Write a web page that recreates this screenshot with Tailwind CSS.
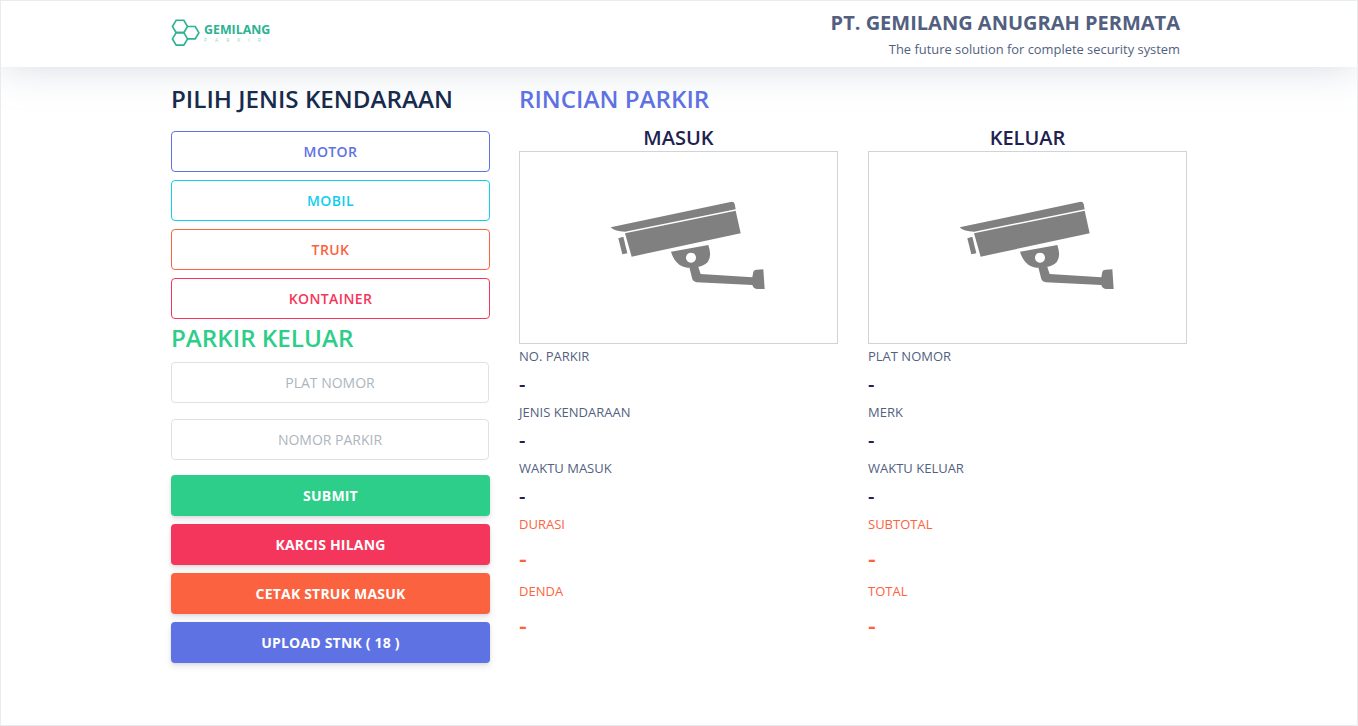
<!DOCTYPE html>
<html lang="id">
<head>
  <meta charset="UTF-8"/>
  <title>Gemilang Parkir</title>
  <script src="https://cdn.jsdelivr.net/npm/@tailwindcss/browser@4"></script>
</head>
<body class="bg-white font-['Open_Sans',sans-serif] antialiased">
  <div class="h-[726px] border border-[#e9ecef] overflow-hidden">
    <!-- Header -->
    <header class="h-[66px] bg-white shadow-[0_0_40px_rgba(136,152,170,0.35)] flex justify-between pl-[170px] pr-[177px]">
      <div class="flex items-center gap-[2px] pb-[2px]">
        <svg width="31" height="28" viewBox="0 0 30 27" fill="none" stroke="#2bb392" stroke-width="1.6">
          <path d="M5 1.2h7.400l3.600 6-3.600 6H5l-3.600-6z"/>
          <path d="M5 13.200h7.400l3.600 6-3.600 6H5l-3.600-6z"/>
          <path d="M16 7.200h7.400l3.600 6-3.600 6H16"/>
        </svg>
        <div class="flex flex-col">
          <span class="text-[12.4px] leading-[13px] font-bold text-[#2bb392]">GEMILANG</span>
          <span class="text-[5px] leading-[7px] pt-px tracking-[8px] text-[#8fd8c6]">PARKIR</span>
        </div>
      </div>
      <div class="text-right">
        <p class="text-[20px] leading-[26px] pt-[9px] font-bold text-[#525f7f]">PT. GEMILANG ANUGRAH PERMATA</p>
        <p class="text-[12.9px] leading-[18px] pt-[4px] text-[#525f7f]">The future solution for complete security system</p>
      </div>
    </header>

    <main class="ml-[170px] w-[1017px] grid grid-cols-[319px_1fr] gap-[29px] pt-[15px]">
      <!-- Kiri -->
      <section>
        <h2 class="text-[24.2px] leading-[34px] font-semibold text-[#172b4d] mb-[15px]">PILIH JENIS KENDARAAN</h2>
        <div class="flex flex-col gap-2">
          <button class="h-[41px] rounded border border-[#5e72e4] bg-white text-[14px] tracking-[0.4px] font-semibold text-[#5e72e4]">MOTOR</button>
          <button class="h-[41px] rounded border border-[#11cdef] bg-white text-[14px] tracking-[0.4px] font-semibold text-[#11cdef]">MOBIL</button>
          <button class="h-[41px] rounded border border-[#fb6340] bg-white text-[14px] tracking-[0.4px] font-semibold text-[#fb6340]">TRUK</button>
          <button class="h-[41px] rounded border border-[#f5365c] bg-white text-[14px] tracking-[0.4px] font-semibold text-[#f5365c]">KONTAINER</button>
        </div>
        <h2 class="text-[24.2px] leading-[34px] font-semibold text-[#2dce89] mt-[2px] mb-[7px]">PARKIR KELUAR</h2>
        <div class="flex flex-col gap-4 mb-[15px]">
          <input placeholder="PLAT NOMOR" class="w-[318px] h-[41px] rounded border border-[#dee2e6] bg-white text-center text-[14px] placeholder:text-[#adb5bd]"/>
          <input placeholder="NOMOR PARKIR" class="w-[318px] h-[41px] rounded border border-[#dee2e6] bg-white text-center text-[14px] placeholder:text-[#adb5bd]"/>
        </div>
        <div class="flex flex-col gap-2">
          <button class="h-[41px] rounded bg-[#2dce89] text-[14px] tracking-[0.2px] font-bold text-white shadow-[0_4px_6px_rgba(50,50,93,0.11),0_1px_3px_rgba(0,0,0,0.08)]">SUBMIT</button>
          <button class="h-[41px] rounded bg-[#f5365c] text-[14px] tracking-[0.2px] font-bold text-white shadow-[0_4px_6px_rgba(50,50,93,0.11),0_1px_3px_rgba(0,0,0,0.08)]">KARCIS HILANG</button>
          <button class="h-[41px] rounded bg-[#fb6340] text-[14px] tracking-[0.2px] font-bold text-white shadow-[0_4px_6px_rgba(50,50,93,0.11),0_1px_3px_rgba(0,0,0,0.08)]">CETAK STRUK MASUK</button>
          <button class="h-[41px] rounded bg-[#5e72e4] text-[14px] tracking-[0.2px] font-bold text-white shadow-[0_4px_6px_rgba(50,50,93,0.11),0_1px_3px_rgba(0,0,0,0.08)]">UPLOAD STNK ( 18 )</button>
        </div>
      </section>

      <!-- Kanan -->
      <section>
        <h2 class="text-[24.2px] leading-[34px] font-semibold text-[#5e72e4]">RINCIAN PARKIR</h2>
        <div class="grid grid-cols-[319px_319px] gap-[30px] mt-[8px]">
          <div>
            <h3 class="text-[20px] leading-[28px] font-semibold text-center text-[#1f2150] -mb-[1px]">MASUK</h3>
            <div class="h-[193px] border border-[#ced4da] flex items-center justify-center">
              <svg width="190" height="110" viewBox="0 0 570 330" class="ml-[12px] mt-[-6px]" fill="#808080">
                <path d="M62 112 L425 35 Q433 35 434 42 L437 58 L105 125 Q75 125 62 112Z"/>
                <path d="M105 130 L437 62 L452 130 L125 200Z"/>
                <path d="M85 145 L100 140 L112 190 L97 193Z"/>
                <path fill-rule="evenodd" d="M243 185 L355 165 Q372 215 335 228 Q262 250 243 185Z M303 188a15 15 0 1 0 .01 0Z"/>
                <path d="M298 232 L324 228 L332 252 L487 262 L490 245 Q492 239 500 239 L520 238 L524 297 L500 297 Q490 295 487 285 L320 277 Q310 275 307 268Z"/>
              </svg>
            </div>
            <dl class="mt-[2px]">
              <dt class="text-[13px] leading-[20px] text-[#525f7f]">NO. PARKIR</dt>
              <dd class="text-[20px] leading-[36px] font-semibold text-[#1f2150]">-</dd>
              <dt class="text-[13px] leading-[20px] text-[#525f7f]">JENIS KENDARAAN</dt>
              <dd class="text-[20px] leading-[36px] font-semibold text-[#1f2150]">-</dd>
              <dt class="text-[13px] leading-[20px] text-[#525f7f]">WAKTU MASUK</dt>
              <dd class="text-[20px] leading-[36px] font-semibold text-[#1f2150]">-</dd>
              <dt class="text-[13px] leading-[20px] text-[#fb6340]">DURASI</dt>
              <dd class="text-[24px] leading-[47px] font-semibold text-[#fb6340]">-</dd>
              <dt class="text-[13px] leading-[20px] text-[#fb6340]">DENDA</dt>
              <dd class="text-[24px] leading-[47px] font-semibold text-[#fb6340]">-</dd>
            </dl>
          </div>
          <div>
            <h3 class="text-[20px] leading-[28px] font-semibold text-center text-[#1f2150] -mb-[1px]">KELUAR</h3>
            <div class="h-[193px] border border-[#ced4da] flex items-center justify-center">
              <svg width="190" height="110" viewBox="0 0 570 330" class="ml-[12px] mt-[-6px]" fill="#808080">
                <path d="M62 112 L425 35 Q433 35 434 42 L437 58 L105 125 Q75 125 62 112Z"/>
                <path d="M105 130 L437 62 L452 130 L125 200Z"/>
                <path d="M85 145 L100 140 L112 190 L97 193Z"/>
                <path fill-rule="evenodd" d="M243 185 L355 165 Q372 215 335 228 Q262 250 243 185Z M303 188a15 15 0 1 0 .01 0Z"/>
                <path d="M298 232 L324 228 L332 252 L487 262 L490 245 Q492 239 500 239 L520 238 L524 297 L500 297 Q490 295 487 285 L320 277 Q310 275 307 268Z"/>
              </svg>
            </div>
            <dl class="mt-[2px]">
              <dt class="text-[13px] leading-[20px] text-[#525f7f]">PLAT NOMOR</dt>
              <dd class="text-[20px] leading-[36px] font-semibold text-[#1f2150]">-</dd>
              <dt class="text-[13px] leading-[20px] text-[#525f7f]">MERK</dt>
              <dd class="text-[20px] leading-[36px] font-semibold text-[#1f2150]">-</dd>
              <dt class="text-[13px] leading-[20px] text-[#525f7f]">WAKTU KELUAR</dt>
              <dd class="text-[20px] leading-[36px] font-semibold text-[#1f2150]">-</dd>
              <dt class="text-[13px] leading-[20px] text-[#fb6340]">SUBTOTAL</dt>
              <dd class="text-[24px] leading-[47px] font-semibold text-[#fb6340]">-</dd>
              <dt class="text-[13px] leading-[20px] text-[#fb6340]">TOTAL</dt>
              <dd class="text-[24px] leading-[47px] font-semibold text-[#fb6340]">-</dd>
            </dl>
          </div>
        </div>
      </section>
    </main>
  </div>
</body>
</html>
